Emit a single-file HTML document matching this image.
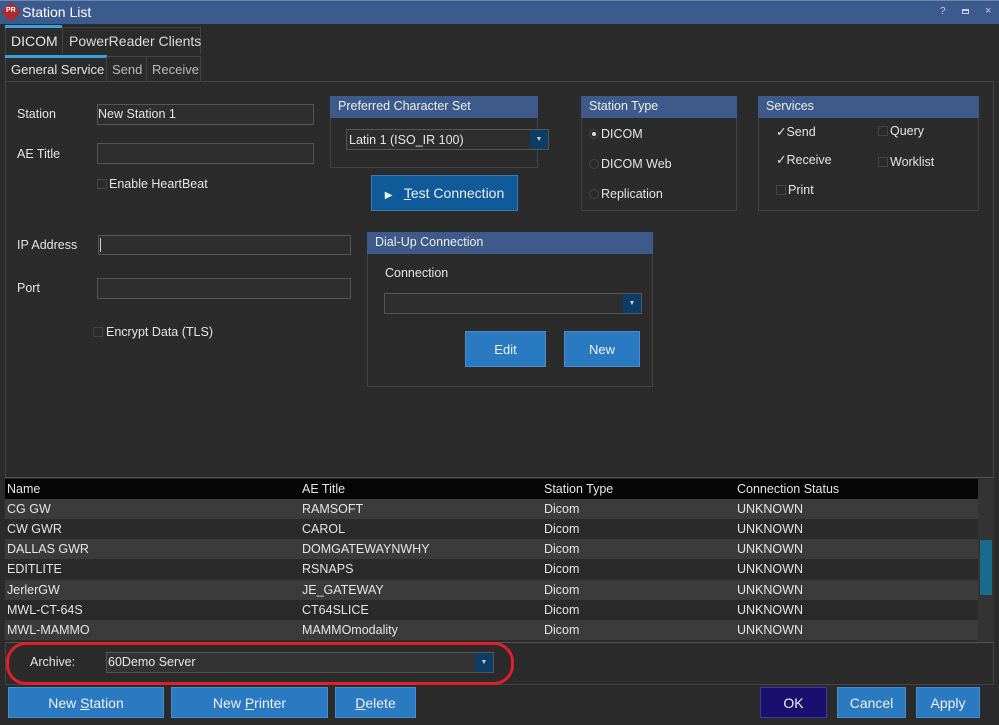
<!DOCTYPE html>
<html><head><meta charset="utf-8"><style>
*{box-sizing:border-box;margin:0;padding:0}
body{width:999px;height:725px;background:#2b2b2b;font-family:"Liberation Sans",sans-serif;font-size:12.5px;color:#e6e6e6;position:relative;overflow:hidden}
.a{position:absolute}
.t{position:absolute;white-space:nowrap}
.in{position:absolute;background:#2e2e2e;border:1px solid #555}
.ph{position:absolute;background:#3d5a8a;color:#eee;padding:3px 8px;height:22px}
.pn{position:absolute;border:1px solid #444}
.btn{position:absolute;background:#2a7ac2;border:1px solid #4a8ccc;color:#f0f0f0;font-size:14px;display:flex;align-items:center;justify-content:center;white-space:pre}
.dd{position:absolute;right:0;top:0;bottom:0;width:18px;background:#0d3d66;color:#ccc;font-size:7px;display:flex;align-items:center;justify-content:center}
.cb{position:absolute;width:10px;height:10px;border:1px solid #444}
.rd{position:absolute;width:10px;height:10px;border:1px solid #444;border-radius:50%}
.row{position:absolute;left:5px;width:973px;height:20px}
.row span{position:absolute;top:3px}
</style></head><body>
<div class="a" style="left:0;top:0;width:999px;height:24px;background:#3b5a8d;border-top:1px solid #6f86ad"></div>
<div class="a" style="left:4px;top:5px;width:14px;height:14px;background:#b02a2a;transform:rotate(45deg);border-radius:2px"></div>
<div class="t" style="left:6px;top:7px;font-size:7px;color:#fff;font-weight:bold">PR</div>
<div class="t" style="left:22px;top:4px;font-size:14px;color:#fff">Station List</div>
<div class="t" style="left:940px;top:6px;font-size:10px;color:#ccd">?</div>
<div class="a" style="left:962px;top:9px;width:7px;height:5px;border:1px solid #ccd;border-top-width:2px"></div>
<div class="t" style="left:985px;top:5px;font-size:11px;color:#ccd">×</div>
<div class="a" style="left:5px;top:27px;width:196px;height:27px;border:1px solid #444;border-bottom:none"></div>
<div class="a" style="left:5px;top:25px;width:57px;height:3px;background:#3aa0e0"></div>
<div class="a" style="left:62px;top:27px;width:1px;height:27px;background:#444"></div>
<div class="t" style="left:11px;top:33px;font-size:14px">DICOM</div>
<div class="t" style="left:69px;top:33px;font-size:14px;color:#ddd">PowerReader Clients</div>
<div class="a" style="left:5px;top:56px;width:196px;height:26px;border:1px solid #444;border-bottom:none"></div>
<div class="a" style="left:5px;top:55px;width:102px;height:3px;background:#3aa0e0"></div>
<div class="a" style="left:106px;top:57px;width:1px;height:25px;background:#444"></div>
<div class="a" style="left:146px;top:57px;width:1px;height:25px;background:#444"></div>
<div class="t" style="left:11px;top:62px;font-size:13px">General Service</div>
<div class="t" style="left:112px;top:62px;font-size:13px;color:#bbb">Send</div>
<div class="t" style="left:152px;top:62px;font-size:13px;color:#bbb">Receive</div>
<div class="pn" style="left:5px;top:81px;width:989px;height:604px"></div>
<div class="t" style="left:17px;top:107px">Station</div>
<div class="in" style="left:97px;top:104px;width:217px;height:21px"></div>
<div class="t" style="left:98px;top:107px">New Station 1</div>
<div class="t" style="left:17px;top:147px">AE Title</div>
<div class="in" style="left:97px;top:143px;width:217px;height:21px"></div>
<div class="cb" style="left:97px;top:179px"></div>
<div class="t" style="left:109px;top:177px">Enable HeartBeat</div>
<div class="t" style="left:17px;top:238px">IP Address</div>
<div class="in" style="left:98px;top:235px;width:253px;height:20px"></div>
<div class="a" style="left:100px;top:238px;width:1px;height:14px;background:#ccc"></div>
<div class="t" style="left:17px;top:281px">Port</div>
<div class="in" style="left:97px;top:278px;width:254px;height:21px"></div>
<div class="cb" style="left:93px;top:327px"></div>
<div class="t" style="left:106px;top:325px">Encrypt Data (TLS)</div>
<div class="pn" style="left:330px;top:96px;width:208px;height:72px"></div>
<div class="ph" style="left:330px;top:96px;width:208px">Preferred Character Set</div>
<div class="in" style="left:346px;top:129px;width:203px;height:21px"><div class="dd">▼</div></div>
<div class="t" style="left:349px;top:133px">Latin 1 (ISO_IR 100)</div>
<div class="btn" style="left:371px;top:175px;width:147px;height:36px;background:#0f5a98;border-color:#3c77b0"><span><span style="font-size:10px">▶</span>   <u>T</u>est Connection</span></div>
<div class="pn" style="left:581px;top:96px;width:156px;height:115px"></div>
<div class="ph" style="left:581px;top:96px;width:156px">Station Type</div>
<div class="rd" style="left:589px;top:129px"></div><div class="a" style="left:592px;top:132px;width:4px;height:4px;border-radius:50%;background:#ddd"></div>
<div class="t" style="left:601px;top:127px">DICOM</div>
<div class="rd" style="left:589px;top:159px"></div><div class="t" style="left:601px;top:157px">DICOM Web</div>
<div class="rd" style="left:589px;top:189px"></div><div class="t" style="left:601px;top:187px">Replication</div>
<div class="pn" style="left:758px;top:96px;width:221px;height:115px"></div>
<div class="ph" style="left:758px;top:96px;width:221px">Services</div>
<div class="t" style="left:776px;top:124px">✓Send</div>
<div class="t" style="left:776px;top:152px">✓Receive</div>
<div class="cb" style="left:776px;top:185px"></div><div class="t" style="left:788px;top:183px">Print</div>
<div class="cb" style="left:878px;top:126px"></div><div class="t" style="left:890px;top:124px">Query</div>
<div class="cb" style="left:878px;top:157px"></div><div class="t" style="left:890px;top:155px">Worklist</div>
<div class="pn" style="left:367px;top:232px;width:286px;height:155px"></div>
<div class="ph" style="left:367px;top:232px;width:286px">Dial-Up Connection</div>
<div class="t" style="left:385px;top:266px">Connection</div>
<div class="in" style="left:384px;top:293px;width:258px;height:21px"><div class="dd">▼</div></div>
<div class="btn" style="left:465px;top:331px;width:81px;height:36px;font-size:13px">Edit</div>
<div class="btn" style="left:564px;top:331px;width:76px;height:36px;font-size:13px">New</div>
<div class="a" style="left:5px;top:477px;width:989px;height:166px;background:#2b2b2b;border-top:1px solid #555"></div>
<div class="row" style="top:479px;background:#050505"><span style="left:2px">Name</span><span style="left:297px">AE Title</span><span style="left:539px">Station Type</span><span style="left:732px">Connection Status</span></div>
<div class="row" style="top:499px;background:#3b3b3b"><span style="left:2px">CG GW</span><span style="left:297px">RAMSOFT</span><span style="left:539px">Dicom</span><span style="left:732px">UNKNOWN</span></div>
<div class="row" style="top:519px;background:#2a2a2a"><span style="left:2px">CW GWR</span><span style="left:297px">CAROL</span><span style="left:539px">Dicom</span><span style="left:732px">UNKNOWN</span></div>
<div class="row" style="top:539px;background:#3b3b3b"><span style="left:2px">DALLAS GWR</span><span style="left:297px">DOMGATEWAYNWHY</span><span style="left:539px">Dicom</span><span style="left:732px">UNKNOWN</span></div>
<div class="row" style="top:559px;background:#2a2a2a"><span style="left:2px">EDITLITE</span><span style="left:297px">RSNAPS</span><span style="left:539px">Dicom</span><span style="left:732px">UNKNOWN</span></div>
<div class="row" style="top:580px;background:#3b3b3b"><span style="left:2px">JerlerGW</span><span style="left:297px">JE_GATEWAY</span><span style="left:539px">Dicom</span><span style="left:732px">UNKNOWN</span></div>
<div class="row" style="top:600px;background:#2a2a2a"><span style="left:2px">MWL-CT-64S</span><span style="left:297px">CT64SLICE</span><span style="left:539px">Dicom</span><span style="left:732px">UNKNOWN</span></div>
<div class="row" style="top:620px;background:#3b3b3b"><span style="left:2px">MWL-MAMMO</span><span style="left:297px">MAMMOmodality</span><span style="left:539px">Dicom</span><span style="left:732px">UNKNOWN</span></div>
<div class="a" style="left:978px;top:479px;width:16px;height:163px;background:#333"></div>
<div class="a" style="left:980px;top:540px;width:12px;height:55px;background:#1a6a8c"></div>
<div class="a" style="left:5px;top:642px;width:989px;height:1px;background:#555"></div>
<div class="t" style="left:30px;top:655px">Archive:</div>
<div class="in" style="left:106px;top:652px;width:388px;height:21px;background:#333"><div class="dd">▼</div></div>
<div class="t" style="left:108px;top:655px">60Demo Server</div>
<div class="a" style="left:6px;top:642px;width:508px;height:43px;border:3px solid #e0202a;border-radius:20px"></div>
<div class="btn" style="left:8px;top:687px;width:156px;height:31px"><span>New <u>S</u>tation</span></div>
<div class="btn" style="left:171px;top:687px;width:157px;height:31px"><span>New <u>P</u>rinter</span></div>
<div class="btn" style="left:335px;top:687px;width:81px;height:31px"><span><u>D</u>elete</span></div>
<div class="btn" style="left:760px;top:687px;width:67px;height:31px;background:#1a0f6e;border-color:#3a3aa0">OK</div>
<div class="btn" style="left:837px;top:687px;width:69px;height:31px">Cancel</div>
<div class="btn" style="left:916px;top:687px;width:64px;height:31px">Apply</div>
</body></html>
